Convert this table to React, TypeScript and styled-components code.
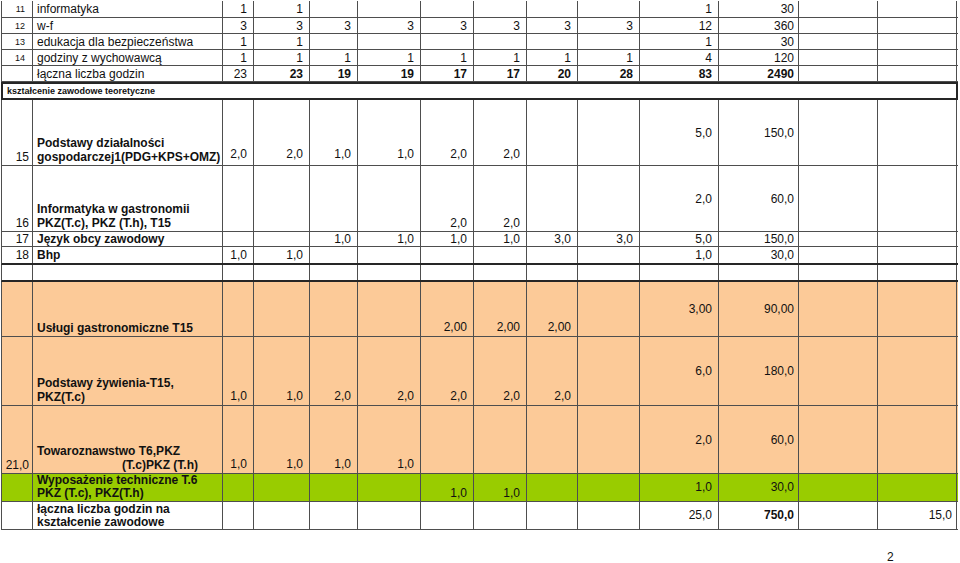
import React from 'react';
import styled, { createGlobalStyle } from 'styled-components';

const COLS = '31px 190px 31px 56px 48px 63px 53px 53px 51px 62px 79px 80px 79px 79px';
const LINE = '#4e4e4e';
const ORANGE = '#fcca98';
const GREEN = '#99cc00';

const GlobalStyle = createGlobalStyle`
  html, body {
    margin: 0;
    padding: 0;
    background: #fff;
  }
  body {
    font-family: "Liberation Sans", Arial, sans-serif;
    color: #111;
  }
`;

const Page = styled.div`
  width: 960px;
  height: 563px;
  overflow: hidden;
  box-sizing: border-box;
  padding: 1px 0 0 1px;
`;

const Sheet = styled.div`
  width: 957px;
  display: flex;
  flex-direction: column;
`;

const Row = styled.div<{ $h: number; $bg?: string; $thick?: boolean; $lh?: number }>`
  display: grid;
  grid-template-columns: ${COLS};
  width: 957px;
  height: ${(p) => p.$h}px;
  box-sizing: border-box;
  background: ${(p) => p.$bg || '#fff'};
  border-left: 1px solid ${LINE};
  border-bottom: ${(p) => (p.$thick ? '2px solid #262626' : `1px solid ${LINE}`)};
  font-size: 12px;
  line-height: ${(p) => p.$lh || 14}px;
`;

const CellBox = styled.div<{
  $right?: boolean;
  $mid?: boolean;
  $bold?: boolean;
  $size?: number;
  $pr?: number;
  $pl?: number;
  $pb?: number;
}>`
  display: flex;
  align-items: ${(p) => (p.$mid ? 'center' : 'flex-end')};
  justify-content: ${(p) => (p.$right ? 'flex-end' : 'flex-start')};
  text-align: ${(p) => (p.$right ? 'right' : 'left')};
  box-sizing: border-box;
  min-width: 0;
  overflow: hidden;
  border-right: 1px solid ${LINE};
  padding: 0 ${(p) => p.$pr ?? 0}px ${(p) => p.$pb ?? 0}px ${(p) => p.$pl ?? 0}px;
  font-size: ${(p) => p.$size || 12}px;
  font-weight: ${(p) => (p.$bold ? 700 : 400)};
  white-space: nowrap;
`;

const Txt = styled.span`
  display: block;
`;

const Indent = styled.span`
  display: inline-block;
  padding-left: 85px;
`;

const SectionBar = styled.div`
  width: 957px;
  height: 18px;
  box-sizing: border-box;
  border: 2px solid #262626;
  display: flex;
  align-items: center;
  padding-left: 4px;
  font-size: 9px;
  font-weight: 700;
`;

const PageNum = styled.div`
  margin-top: 21px;
  padding-left: 886px;
  font-size: 12px;
  line-height: 12px;
`;

type CellProps = React.ComponentProps<typeof CellBox> & { children?: React.ReactNode };

const Cell = ({ children, ...rest }: CellProps) => (
  <CellBox {...rest}>{children ? <Txt>{children}</Txt> : null}</CellBox>
);

interface RowDef {
  h: number;
  bg?: string;
  thick?: boolean;
  lh?: number;
  num?: string;
  numSmall?: boolean;
  label: React.ReactNode;
  labelBold?: boolean;
  vals: string[];
  bold?: number[];
  allMid?: boolean;
  valPb?: number;
}

// vals: 12 cells, column 3 to 14 of the sheet; 8 and 9 are the sum columns
const DataRow = ({ h, bg, thick, lh, num, numSmall, label, labelBold, vals, bold = [], allMid, valPb = 4 }: RowDef) => (
  <Row $h={h} $bg={bg} $thick={thick} $lh={lh}>
    <Cell $right $mid={allMid} $size={numSmall ? 9 : 12} $pr={numSmall ? 7 : 3} $pb={allMid ? 0 : 1}>
      {num}
    </Cell>
    <Cell $bold={labelBold} $mid={allMid} $pl={4} $pb={allMid ? 0 : 1}>
      {label}
    </Cell>
    {vals.map((v, i) => {
      const sum = i === 8 || i === 9;
      return (
        <Cell
          key={i}
          $right
          $mid={allMid || sum}
          $bold={bold.includes(i)}
          $pr={i === 9 || i === 11 ? 4 : 6}
          $pb={allMid || sum ? 0 : valPb}
        >
          {v}
        </Cell>
      );
    })}
  </Row>
);

const e = '';

const App = () => (
  <Page>
    <GlobalStyle />
    <Sheet>
      <DataRow h={17} num="11" numSmall allMid label="informatyka"
        vals={['1', '1', e, e, e, e, e, e, '1', '30', e, e]} />
      <DataRow h={16} num="12" numSmall allMid label="w-f"
        vals={['3', '3', '3', '3', '3', '3', '3', '3', '12', '360', e, e]} />
      <DataRow h={16} num="13" numSmall allMid label="edukacja dla bezpieczeństwa"
        vals={['1', '1', e, e, e, e, e, e, '1', '30', e, e]} />
      <DataRow h={16} num="14" numSmall allMid label="godziny z wychowawcą"
        vals={['1', '1', '1', '1', '1', '1', '1', '1', '4', '120', e, e]} />
      <DataRow h={16} allMid label="łączna liczba godzin"
        vals={['23', '23', '19', '19', '17', '17', '20', '28', '83', '2490', e, e]}
        bold={[1, 2, 3, 4, 5, 6, 7, 8, 9]} />

      <SectionBar>kształcenie zawodowe teoretyczne</SectionBar>

      <DataRow h={66} num="15" labelBold
        label={<>Podstawy działalności<br />gospodarczej1(PDG+KPS+OMZ)</>}
        vals={['2,0', '2,0', '1,0', '1,0', '2,0', '2,0', e, e, '5,0', '150,0', e, e]} />
      <DataRow h={66} num="16" labelBold
        label={<>Informatyka w gastronomii<br />PKZ(T.c), PKZ (T.h), T15</>}
        vals={[e, e, e, e, '2,0', '2,0', e, e, '2,0', '60,0', e, e]} valPb={1} />
      <DataRow h={15} num="17" labelBold allMid label="Język obcy zawodowy"
        vals={[e, e, '1,0', '1,0', '1,0', '1,0', '3,0', '3,0', '5,0', '150,0', e, e]} />
      <DataRow h={18} num="18" labelBold thick allMid label="Bhp"
        vals={['1,0', '1,0', e, e, e, e, e, e, '1,0', '30,0', e, e]} />
      <DataRow h={17} thick label=""
        vals={[e, e, e, e, e, e, e, e, e, e, e, e]} />

      <DataRow h={55} bg={ORANGE} labelBold valPb={2}
        label="Usługi gastronomiczne T15"
        vals={[e, e, e, e, '2,00', '2,00', '2,00', e, '3,00', '90,00', e, e]} />
      <DataRow h={69} bg={ORANGE} labelBold valPb={2}
        label={<>Podstawy żywienia-T15,<br />PKZ(T.c)</>}
        vals={['1,0', '1,0', '2,0', '2,0', '2,0', '2,0', '2,0', e, '6,0', '180,0', e, e]} />
      <DataRow h={68} bg={ORANGE} labelBold num="21,0" valPb={2}
        label={<>Towaroznawstwo T6,PKZ<br /><Indent>(T.c)PKZ (T.h)</Indent></>}
        vals={['1,0', '1,0', '1,0', '1,0', e, e, e, e, '2,0', '60,0', e, e]} />
      <DataRow h={28} bg={GREEN} labelBold lh={13} valPb={1}
        label={<>Wyposażenie techniczne T.6<br />PKZ (T.c), PKZ(T.h)</>}
        vals={[e, e, e, e, '1,0', '1,0', e, e, '1,0', '30,0', e, e]} />
      <DataRow h={28} labelBold lh={13} allMid
        label={<>łączna liczba godzin na<br />kształcenie zawodowe</>}
        vals={[e, e, e, e, e, e, e, e, '25,0', '750,0', e, '15,0']}
        bold={[9]} />
    </Sheet>
    <PageNum>2</PageNum>
  </Page>
);

export default App;
